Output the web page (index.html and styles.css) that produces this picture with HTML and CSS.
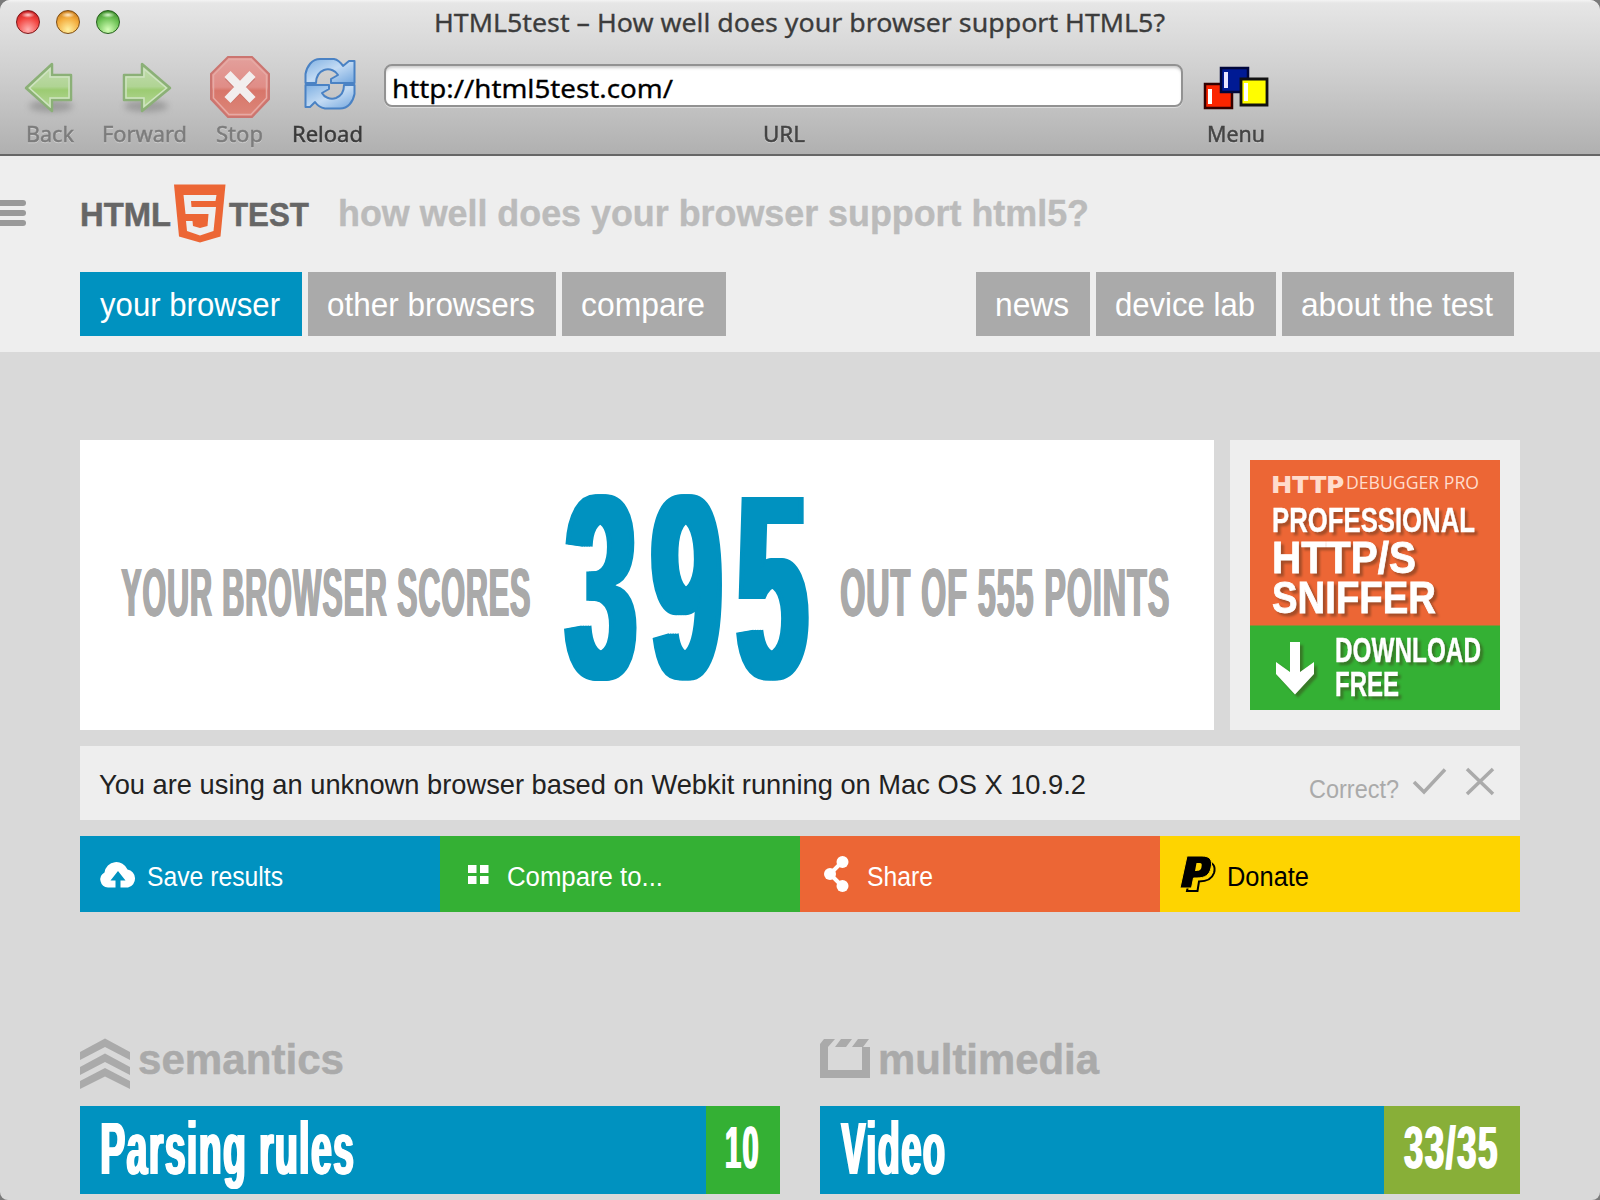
FILE: index.html
```html
<!DOCTYPE html>
<html lang="en">
<head>
<meta charset="utf-8">
<title>HTML5test – How well does your browser support HTML5?</title>
<link rel="stylesheet" href="styles.css">
</head>
<body>
<div class="window">
  <div class="chrome">
    <div class="titlebar">
      <div class="lights"><i class="light red"></i><i class="light amber"></i><i class="light green"></i></div>
      <svg class="title" width="731" height="46"><text x="0" y="32" textLength="731" lengthAdjust="spacingAndGlyphs">HTML5test – How well does your browser support HTML5?</text></svg>
    </div>
    <div class="toolbar">
      <div class="tool off">
        <svg width="56" height="72" viewBox="0 0 56 72">
          <defs><linearGradient id="ga" x1="0" y1="0" x2="0" y2="1"><stop offset="0" stop-color="#c3dcb0"/><stop offset=".48" stop-color="#b0d494"/><stop offset=".55" stop-color="#9ccb72"/><stop offset="1" stop-color="#b9d9a0"/></linearGradient>
          <filter id="soft" x="-30%" y="-100%" width="160%" height="300%"><feGaussianBlur stdDeviation="3"/></filter></defs>
          <ellipse cx="29" cy="60" rx="22" ry="6" fill="#777" opacity=".5" filter="url(#soft)"/>
          <path d="M4 42 30 18V29H49V54H30V65Z" fill="url(#ga)" stroke="#8bb077" stroke-width="2.500" stroke-linejoin="round"/>
          <path d="M7.500 42 28 23V31H47V52H28V60.500Z" fill="none" stroke="#cfe3c2" stroke-width="1.500"/>
        </svg>
        <svg class="label" width="49" height="32"><text x="1" y="24" textLength="48" lengthAdjust="spacingAndGlyphs">Back</text></svg>
      </div>
      <div class="tool off">
        <svg width="56" height="72" viewBox="0 0 56 72">
          <ellipse cx="30" cy="60" rx="22" ry="6" fill="#777" opacity=".5" filter="url(#soft)"/>
          <path d="M54 42 26 18V29H8V54H26V65Z" fill="url(#ga)" stroke="#8bb077" stroke-width="2.500" stroke-linejoin="round"/>
          <path d="M50.500 42 28 23V31H10V52H28V60.500Z" fill="none" stroke="#cfe3c2" stroke-width="1.500"/>
        </svg>
        <svg class="label" width="86" height="32"><text x="1" y="24" textLength="85" lengthAdjust="spacingAndGlyphs">Forward</text></svg>
      </div>
      <div class="tool off">
        <svg width="62" height="72" viewBox="0 0 62 72">
          <defs><linearGradient id="gs" x1="0" y1="0" x2="0" y2="1"><stop offset="0" stop-color="#e3a09c"/><stop offset=".5" stop-color="#e08d87"/><stop offset=".56" stop-color="#d8766a"/><stop offset="1" stop-color="#dc8679"/></linearGradient></defs>
          <path d="M19 11H43L60 28V53L43 71H19L2 53V28Z" fill="url(#gs)" stroke="#cb7570" stroke-width="2"/>
          <path d="M20 13.500H42L57.500 29V52L42 68.500H20L4.500 52V29Z" fill="none" stroke="#e6aaa5" stroke-width="1.500"/>
          <path d="M19 30 43 54M43 30 19 54" stroke="#b9645c" opacity=".5" stroke-width="9"/>
          <path d="M18.500 28 43.500 54M43.500 28 18.500 54" stroke="#f2eeee" stroke-width="8.500"/>
        </svg>
        <svg class="label" width="48" height="32"><text x="0" y="24" textLength="47" lengthAdjust="spacingAndGlyphs">Stop</text></svg>
      </div>
      <div class="tool">
        <svg class="reload" width="54" height="72" viewBox="0 0 54 72">
          <defs><linearGradient id="gr" x1="0" y1="0" x2="1" y2="1"><stop offset="0" stop-color="#7fb0e2"/><stop offset=".5" stop-color="#c3dbf4"/><stop offset="1" stop-color="#74a7de"/></linearGradient></defs>
          <g fill="url(#gr)" stroke="#4a82c4" stroke-width="2" stroke-linejoin="round">
          <path d="M2.500 37V28C4 20 9 13 17 13H31C36 14 38 17 40 20L46 15H51.500V37H28V33L35 29C33 25 27 22 21 24 16 26 13 31 13 37Z"/>
          <path d="M51.500 39V48C50 56 45 62.500 37 62.500H22C17 61.500 14 59 12 56L7 61H2.500V39H26V43L19 47C21 51 27 54 33 52 38 50 41 45 41 39Z"/></g>
        </svg>
        <svg class="label" width="71" height="32"><text x="-1" y="24" textLength="71" lengthAdjust="spacingAndGlyphs">Reload</text></svg>
      </div>
      <div class="address">
        <div class="field"><svg width="282" height="43"><text x="-1" y="34" textLength="281" lengthAdjust="spacingAndGlyphs">http://html5test.com/</text></svg></div>
        <svg class="label mid" width="42" height="32"><text x="0" y="24" textLength="42" lengthAdjust="spacingAndGlyphs">URL</text></svg>
      </div>
      <div class="tool">
        <svg width="66" height="72" viewBox="0 0 66 72">
          <path d="M2 38H29V62H2Z" fill="#fb2500" stroke="#300" stroke-width="2.500"/><path d="M5 43H9V58H5Z" fill="#fff"/>
          <path d="M18 22H45V46H18Z" fill="#001a94" stroke="#00063a" stroke-width="2.500"/><path d="M21 26H25V42H21Z" fill="#e8e4ff"/>
          <path d="M38 33H64V59H38Z" fill="#fffd00" stroke="#111" stroke-width="2.800"/><path d="M41 37H45V55H41Z" fill="#fff"/>
        </svg>
        <svg class="label mid" width="58" height="32"><text x="0" y="24" textLength="58" lengthAdjust="spacingAndGlyphs">Menu</text></svg>
      </div>
    </div>
  </div>

  <header class="header">
    <div class="brand">
      <div class="burger"><i></i><i></i><i></i></div>
      <svg class="logo" width="240" height="70">
        <text x="0" y="48" textLength="91" lengthAdjust="spacingAndGlyphs">HTML</text>
        <path d="M94 6.500H145.500L140.500 58.500 120 64.500 99 58.500Z" fill="#ec6635"/>
        <path d="M103.500 17H136.500L135.500 23H111L111.500 29H136L133.500 53 120 57.500 107 53 106 43H112.500L113 48 120 50 127.500 48 128.500 36H105.500Z" fill="#eee"/>
        <text x="149" y="48" textLength="80" lengthAdjust="spacingAndGlyphs">TEST</text>
      </svg>
      <svg class="tagline" width="760" height="70"><text x="2" y="48" textLength="751" lengthAdjust="spacingAndGlyphs">how well does your browser support html5?</text></svg>
    </div>
    <nav class="nav">
      <a class="tab w1 on"><svg width="182" height="64"><text x="0" y="44" textLength="180" lengthAdjust="spacingAndGlyphs">your browser</text></svg></a>
      <a class="tab w2"><svg width="208" height="64"><text x="-1" y="44" textLength="208" lengthAdjust="spacingAndGlyphs">other browsers</text></svg></a>
      <a class="tab w3"><svg width="124" height="64"><text x="-1" y="44" textLength="124" lengthAdjust="spacingAndGlyphs">compare</text></svg></a>
      <a class="tab w4 push"><svg width="74" height="64"><text x="-1" y="44" textLength="74" lengthAdjust="spacingAndGlyphs">news</text></svg></a>
      <a class="tab w5"><svg width="140" height="64"><text x="-1" y="44" textLength="140" lengthAdjust="spacingAndGlyphs">device lab</text></svg></a>
      <a class="tab w6"><svg width="192" height="64"><text x="-1" y="44" textLength="192" lengthAdjust="spacingAndGlyphs">about the test</text></svg></a>
    </nav>
  </header>

  <main class="main">
    <section class="top">
      <div class="score">
        <svg class="big" width="1134" height="290">
          <text class="side" x="41" y="176" textLength="410" lengthAdjust="spacingAndGlyphs">YOUR BROWSER SCORES</text>
          <text class="num" transform="translate(486 238) scale(.48 1)">395</text>
          <text class="side" x="760" y="176" textLength="330" lengthAdjust="spacingAndGlyphs">OUT OF 555 POINTS</text>
        </svg>
      </div>
      <div class="adbox">
        <svg class="ad" width="250" height="250">
          <rect width="250" height="250" fill="#ec6635"/><rect y="165.500" width="250" height="84.500" fill="#34b034"/>
          <text class="brandname" x="22" y="33" textLength="72" lengthAdjust="spacingAndGlyphs">HTTP</text>
          <text class="product" x="96" y="29" textLength="133" lengthAdjust="spacingAndGlyphs">DEBUGGER PRO</text>
          <g class="pitch">
            <text class="s" x="22" y="71.500" textLength="203" lengthAdjust="spacingAndGlyphs">PROFESSIONAL</text>
            <text x="22" y="112.500" textLength="144" lengthAdjust="spacingAndGlyphs">HTTP/S</text>
            <text x="22" y="152.500" textLength="164" lengthAdjust="spacingAndGlyphs">SNIFFER</text>
            <text class="s" x="85" y="201.500" textLength="146" lengthAdjust="spacingAndGlyphs">DOWNLOAD</text>
            <text class="s" x="85" y="236" textLength="64" lengthAdjust="spacingAndGlyphs">FREE</text>
            <path d="M40 182H50V212L64 202V214L45 234.500 26 214V202L40 212Z"/>
          </g>
        </svg>
      </div>
    </section>

    <section class="agent">
      <svg width="990" height="74"><text x="0" y="47.500" textLength="987" lengthAdjust="spacingAndGlyphs">You are using an unknown browser based on Webkit running on Mac OS X 10.9.2</text></svg>
      <div class="correct">
        <svg width="92" height="74"><text x="1" y="52" textLength="90" lengthAdjust="spacingAndGlyphs">Correct?</text></svg>
        <svg class="mark" width="36" height="74"><path d="M3 36 13 46 34 23.500"/></svg>
        <svg class="mark" width="30" height="74"><path d="M2 23 28 48M28 23 2 48"/></svg>
      </div>
    </section>

    <section class="actions">
      <a class="act blue"><svg width="46" height="76"><path d="M8 51.500A8 8 0 0 1 4.500 36.500 12 12 0 0 1 27.500 33.500 9.200 9.200 0 0 1 28 51.500H20.500V44.500H25.500L18 35 10.500 44.500H15.500V51.500Z" fill="#fff"/></svg><svg width="140" height="76"><text x="0" y="50" textLength="136" lengthAdjust="spacingAndGlyphs">Save results</text></svg></a>
      <a class="act green"><svg width="46" height="76"><path d="M8 29H16.500V37H8ZM20 29H28.500V37H20ZM8 40H16.500V48H8ZM20 40H28.500V48H20Z" fill="#fff"/></svg><svg width="160" height="76"><text x="0" y="50" textLength="156" lengthAdjust="spacingAndGlyphs">Compare to...</text></svg></a>
      <a class="act orange"><svg width="46" height="76"><path d="M22 26 10 38 22 50" fill="none" stroke="#fff" stroke-width="4"/><g fill="#fff"><circle cx="22.500" cy="26" r="6"/><circle cx="10" cy="38" r="6"/><circle cx="22.500" cy="50" r="6"/></g></svg><svg width="80" height="76"><text x="0" y="50" textLength="66" lengthAdjust="spacingAndGlyphs">Share</text></svg></a>
      <a class="act yellow"><svg width="46" height="76"><path d="M13 25H25C33 26 36 30 34 37 32 43 27 45.500 19 45.500L17.500 55H7L8 50" fill="none" stroke="#000" stroke-width="2"/><path d="M7 20H22C30 20 33 24 31 32 29.500 39 25 42 17 42H13.500L11.500 52H0Z" fill="#000" stroke="#fed400" stroke-width="1"/><path d="M16.500 27H19C22 27 22 28 21.500 31 21 34.500 19 35 15 35Z" fill="#fed400"/></svg><svg width="84" height="76"><text x="0" y="50" textLength="82" lengthAdjust="spacingAndGlyphs">Donate</text></svg></a>
    </section>

    <section class="groups">
      <div class="group">
        <h2 class="head"><svg width="50" height="50"><path d="M0 13 25 -.5 50 13V21L25 8 0 21ZM0 28 25 14.500 50 28V36L25 23 0 36ZM0 42 25 29 50 42V50L25 37.500 0 50Z" fill="#aaa"/></svg><svg width="240" height="50"><text x="-1" y="35" textLength="206" lengthAdjust="spacingAndGlyphs">semantics</text></svg></h2>
        <div class="row"><svg width="626" height="88"><text class="name" x="20" y="68" textLength="255" lengthAdjust="spacingAndGlyphs">Parsing rules</text></svg><div class="pts full"><svg width="34" height="88"><text x="-1" y="62" textLength="35" lengthAdjust="spacingAndGlyphs">10</text></svg></div></div>
      </div>
      <div class="group">
        <h2 class="head"><svg width="50" height="50"><path d="M0 5 4 0H15L8 8V31H42V8H50V39H0ZM21 0H32L26 8H15ZM38 0H49L43 8H32Z" fill="#aaa"/></svg><svg width="240" height="50"><text x="-1" y="35" textLength="221" lengthAdjust="spacingAndGlyphs">multimedia</text></svg></h2>
        <div class="row"><svg width="564" height="88"><text class="name" x="21" y="68" textLength="105" lengthAdjust="spacingAndGlyphs">Video</text></svg><div class="pts part"><svg width="96" height="88"><text x="0" y="62" textLength="95" lengthAdjust="spacingAndGlyphs">33/35</text></svg></div></div>
      </div>
    </section>
  </main>
</div>
</body>
</html>
```
FILE: styles.css
```css
* { box-sizing: border-box; }
body { margin: 0; background: #7a7a7a; font-family: "Liberation Sans", sans-serif; }
svg { display: block; flex: none; overflow: visible; }
i { display: block; }

.window { width: 1600px; height: 1200px; overflow: hidden; border-radius: 10px 10px 8px 8px; background: #d9d9d9; }

/* window chrome */
.chrome { height: 156px; background: linear-gradient(#f4f4f4 0, #e6e6e6 3px, #d0d0d0 70px, #b0b0b0 154px); border-bottom: 2px solid #666; font-family: "Noto Sans", "Open Sans", sans-serif; }
.titlebar { display: grid; grid-template-columns: 434px 1fr; height: 46px; }
.title { font-size: 26px; fill: #3c3c3c; stroke: #3c3c3c; stroke-width: .3px; }
.lights { display: flex; gap: 16px; padding: 10px 0 0 16px; }
.light { width: 24px; height: 24px; border-radius: 50%; border: 1.5px solid; }
.red { background: radial-gradient(ellipse 7px 3px at 50% 18%, #ffd0d0, transparent), radial-gradient(circle at 50% 85%, #ffb0b0, #f2443f 55%, #b31218); border-color: #7c1518; }
.amber { background: radial-gradient(ellipse 7px 3px at 50% 18%, #ffeccb, transparent), radial-gradient(circle at 50% 85%, #fff0a0, #f3ab3c 55%, #b86a10); border-color: #7d4d14; }
.light.green { background: radial-gradient(ellipse 7px 3px at 50% 18%, #d8f5cd, transparent), radial-gradient(circle at 50% 85%, #d5ffb8, #6cc154 55%, #2f7a20); border-color: #255f1c; }
.toolbar { display: grid; grid-template-columns: 99px 90px 102px 74px 19px 799px 20px 66px; height: 108px; }
.tool { display: flex; flex-direction: column; align-items: center; }
.address { grid-column: 6; display: flex; flex-direction: column; align-items: center; gap: 11px; padding-top: 18px; }
.tool:last-child { grid-column: 8; }
.reload { margin-left: 4px; }
.label { font-size: 22.5px; fill: #3a3a3a; stroke: #3a3a3a; stroke-width: .5px; filter: drop-shadow(0 1px 0 rgba(255,255,255,.35)); }
.off .label { fill: #7c7c7c; stroke: #7c7c7c; }
.label.mid { fill: #444; stroke: #444; }
.field { width: 799px; height: 43px; padding-left: 7px; background: #fff; border: 2px solid #929292; border-radius: 8px; box-shadow: inset 0 3px 3px -1px #ccc, 0 1px 0 #ddd; }
.field svg { margin-top: -2px; font-size: 26px; fill: #000; stroke: #000; stroke-width: .3px; }

/* site header */
.header { height: 196px; background: #eee; }
.brand { display: flex; height: 116px; padding-top: 22px; }
.burger { display: flex; flex-direction: column; gap: 4px; width: 80px; padding-top: 22px; }
.burger i { width: 26px; height: 6px; border-radius: 0 3px 3px 0; background: #999; }
.logo { font: bold 33px "Liberation Sans", sans-serif; fill: #666; stroke: #666; stroke-width: .5px; }
.logo path { stroke: none; }
.tagline { margin-left: 16px; font: bold 36px "Liberation Sans", sans-serif; fill: #bbb; stroke: #bbb; stroke-width: .4px; }
.nav { display: flex; gap: 6px; padding: 0 86px 0 80px; }
.tab { display: flex; height: 64px; padding-left: 20px; background: #aaa; font-size: 32.5px; fill: #fff; }
.tab.on { background: #0092c0; }
.push { margin-left: auto; }
.w1 { width: 222px; } .w2 { width: 248px; } .w3 { width: 164px; }
.w4 { width: 114px; } .w5 { width: 180px; } .w6 { width: 232px; }

/* results */
.main { padding: 88px 80px 0; }
.top { display: flex; gap: 16px; }
.score { width: 1134px; height: 290px; background: #fff; }
.big { font-weight: bold; }
/* sideways shadows thicken the stems of the condensed display text */
.side { font-size: 69px; letter-spacing: 2px; fill: #aaa; text-shadow: 1px 0 #aaa, -1px 0 #aaa, 2px 0 #aaa; }
.num { font-size: 263px; letter-spacing: 32px; fill: #0092c0; text-shadow: 4px 0 #0092c0, -4px 0 #0092c0, 8px 0 #0092c0, -8px 0 #0092c0; }
.adbox { width: 290px; height: 290px; padding: 20px; background: #eee; }
.brandname { font: 900 23px "Inter", sans-serif; fill: #ffdccc; }
.product { font: 400 19px "Open Sans", sans-serif; fill: #ffdccc; }
.pitch { font: bold 44px "Liberation Sans", sans-serif; fill: #fff; filter: drop-shadow(3px 3px 1px rgba(60,40,20,.4)); }
.pitch text { stroke: #fff; stroke-width: .8px; }
.pitch .s { font-size: 35px; stroke-width: .4px; }
.agent { display: flex; justify-content: space-between; height: 74px; margin-top: 16px; padding: 0 25px 0 19px; background: #eee; font-size: 28px; fill: #222; }
.correct { display: flex; font-size: 25px; fill: #aaa; }
.mark { margin-left: 11px; fill: none; stroke: #aaa; stroke-width: 3.5px; }
.mark:last-child { margin-left: 18px; }
.actions { display: grid; grid-template-columns: repeat(4, 360px); margin-top: 16px; font-size: 27px; fill: #fff; }
.act { display: flex; gap: 1px; height: 76px; padding-left: 20px; }
.blue { background: #0092c0; }
.act.green { background: #34b034; }
.orange { background: #ec6635; }
.yellow { background: #fed400; fill: #000; }
.groups { display: grid; grid-template-columns: 700px 700px; gap: 40px; margin-top: 127px; }
.head { display: flex; gap: 9px; height: 67px; margin: 0; font: bold 42px "Liberation Sans", sans-serif; fill: #aaa; stroke: #aaa; stroke-width: .5px; }
.head path { stroke: none; }
.row { display: flex; height: 88px; background: #0092c0; font-weight: bold; fill: #fff; }
.name { font-size: 74px; letter-spacing: 3px; text-shadow: 1.5px 0 #fff, -1.5px 0 #fff, 3px 0 #fff; }
.pts { flex: 1; padding-left: 20px; font-size: 60px; letter-spacing: 3px; text-shadow: 1.5px 0 #fff, -1.5px 0 #fff; }
.full { background: #34b034; }
.part { background: #88af38; }
```
